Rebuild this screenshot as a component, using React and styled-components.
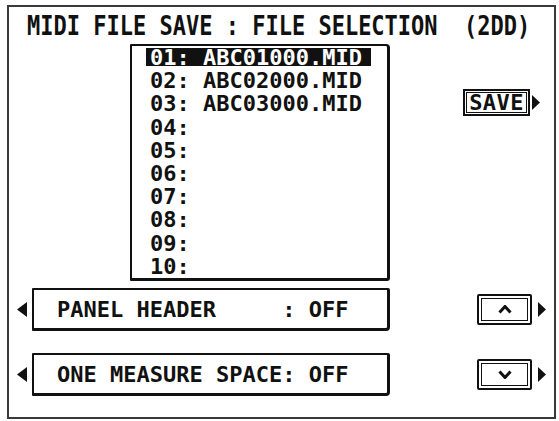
import React from 'react';
import styled, { createGlobalStyle } from 'styled-components';

const GlobalStyle = createGlobalStyle`
  body {
    margin: 0;
    background: #ffffff;
    font-family: 'DejaVu Sans Mono', 'Liberation Mono', monospace;
    color: #111111;
  }
`;

const Frame = styled.div`
  box-sizing: border-box;
  width: 549px;
  height: 414px;
  margin: 5px 0 0 7px;
  border: 2px solid #3a3a3a;
  display: flex;
  flex-direction: column;
`;

const Title = styled.h1`
  margin: 0;
  height: 37px;
  padding-left: 18px;
  display: flex;
  align-items: center;
  font-size: 22px;
  font-weight: bold;
  white-space: pre;
  transform: scaleY(1.22);
`;

const Middle = styled.div`
  display: flex;
  height: 237px;
  padding-left: 121px;
`;

const ListBox = styled.ul`
  box-sizing: border-box;
  margin: 0;
  width: 260px;
  height: 237px;
  list-style: none;
  border-style: solid;
  border-color: #111;
  border-width: 2px 3px 3px 2px;
  border-radius: 1px 4px 3px 1px;
  padding: 0 0 0 18px;
`;

const FileRow = styled.li`
  height: 23.2px;
  line-height: 23.2px;
  font-size: 22px;
  font-weight: bold;
  white-space: pre;
`;

const Selected = styled.span`
  display: inline-block;
  line-height: 16px;
  padding: 2px 9px 0 4px;
  margin-left: -4px;
  background: #111;
  color: #fff;
`;

const SideGroup = styled.div`
  display: flex;
  align-items: center;
  gap: 2px;
  height: 27px;
  margin: 45px 0 0 73px;
`;

const SaveButton = styled.div`
  box-sizing: border-box;
  width: 67px;
  height: 27px;
  border: 2px solid #111;
  box-shadow: inset 0 0 0 1px #fff, inset 0 0 0 2px #111;
  display: flex;
  align-items: center;
  justify-content: center;
  font-size: 22px;
  font-weight: bold;
  letter-spacing: 0.4px;
`;

const Bottom = styled.div`
  display: flex;
  flex-direction: column;
  gap: 22px;
  padding-top: 7px;
`;

const OptionRow = styled.div`
  display: flex;
  align-items: center;
  height: 43px;
  padding-left: 8px;
`;

const OptionBox = styled.div`
  box-sizing: border-box;
  width: 358px;
  height: 100%;
  margin-left: 5px;
  border-style: solid;
  border-color: #111;
  border-width: 2px 3px 3px 2px;
  border-radius: 1px 2px 4px 1px;
  padding-left: 23px;
  display: flex;
  align-items: center;
  font-size: 22px;
  font-weight: bold;
  white-space: pre;
`;

const ScrollButton = styled.div`
  box-sizing: border-box;
  width: 55px;
  height: 31px;
  margin-left: 87px;
  border: 2px solid #111;
  border-radius: 2px;
  box-shadow: inset 0 0 0 2px #fff, inset 0 0 0 3px #111;
  display: flex;
  align-items: center;
  justify-content: center;
`;

const Arrow = styled.svg`
  display: block;
  flex: none;
  margin-left: ${p => p.$gap || 0}px;
`;

const LeftTriangle = () => (
  <Arrow width="10" height="15" viewBox="0 0 10 15">
    <polygon points="10,0 0,7.5 10,15" fill="#111" />
  </Arrow>
);

const RightTriangle = ({ gap }) => (
  <Arrow $gap={gap} width="8" height="15" viewBox="0 0 8 15">
    <polygon points="0,0 8,7.5 0,15" fill="#111" />
  </Arrow>
);

const Chevron = ({ down }) => (
  <svg width="14" height="9" viewBox="0 0 14 9">
    <polyline
      points={down ? '1.5,1.5 7,7.5 12.5,1.5' : '1.5,7.5 7,1.5 12.5,7.5'}
      fill="none"
      stroke="#111"
      strokeWidth="3"
    />
  </svg>
);

const files = [
  'ABC01000.MID',
  'ABC02000.MID',
  'ABC03000.MID',
  '', '', '', '', '', '', '',
];

const options = [
  { label: 'PANEL HEADER     : OFF', down: false },
  { label: 'ONE MEASURE SPACE: OFF', down: true },
];

export default function App() {
  return (
    <>
      <GlobalStyle />
      <Frame>
        <Title>{'MIDI FILE SAVE : FILE SELECTION  (2DD)'}</Title>
        <Middle>
          <ListBox>
            {files.map((name, i) => {
              const num = String(i + 1).padStart(2, '0');
              const text = `${num}: ${name}`;
              return (
                <FileRow key={num}>
                  {i === 0 ? <Selected>{text}</Selected> : text}
                </FileRow>
              );
            })}
          </ListBox>
          <SideGroup>
            <SaveButton>SAVE</SaveButton>
            <RightTriangle />
          </SideGroup>
        </Middle>
        <Bottom>
          {options.map(o => (
            <OptionRow key={o.label}>
              <LeftTriangle />
              <OptionBox>{o.label}</OptionBox>
              <ScrollButton>
                <Chevron down={o.down} />
              </ScrollButton>
              <RightTriangle gap={6} />
            </OptionRow>
          ))}
        </Bottom>
      </Frame>
    </>
  );
}
